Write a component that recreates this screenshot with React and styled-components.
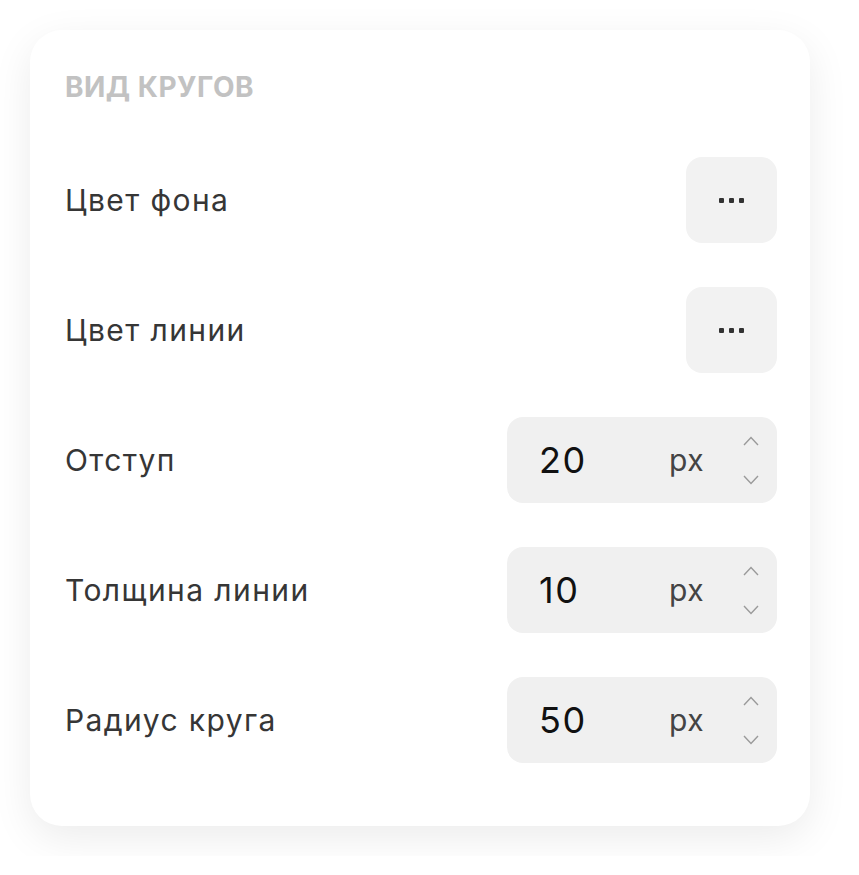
import React from "react"
import styled, { createGlobalStyle } from "styled-components"

const GlobalStyle = createGlobalStyle`
  body {
    margin: 0;
    background: #fff;
    font-family: Inter, "Noto Sans", sans-serif;
  }
`

const Page = styled.div`
  padding: 30px;
`

const Card = styled.section`
  width: 780px;
  box-sizing: border-box;
  background: #fff;
  border-radius: 32px;
  box-shadow: 0 12px 40px rgba(0, 0, 0, 0.08);
  padding: 40px 33px 63px 35px;
`

const Heading = styled.h3`
  margin: 0 0 53px;
  font-size: 28px;
  line-height: 34px;
  font-weight: 700;
  letter-spacing: 0.5px;
  color: #c2c2c2;
  text-transform: uppercase;
`

const List = styled.div`
  display: flex;
  flex-direction: column;
  gap: 44px;
`

const Row = styled.div`
  display: flex;
  align-items: center;
  justify-content: space-between;
  height: 86px;
`

const Label = styled.span`
  font-size: 30px;
  letter-spacing: 1.4px;
  color: #363636;
`

const MoreButton = styled.button`
  width: 91px;
  height: 86px;
  border: 0;
  border-radius: 16px;
  background: #f2f2f2;
  display: flex;
  align-items: center;
  justify-content: center;
  gap: 5px;
  cursor: pointer;
`

const Dot = styled.i`
  width: 5px;
  height: 5px;
  border-radius: 1px;
  background: #333;
`

const NumberBox = styled.div`
  width: 270px;
  height: 86px;
  box-sizing: border-box;
  border-radius: 16px;
  background: #f0f0f0;
  display: grid;
  grid-template-columns: 130px 1fr 53px;
  align-items: center;
  padding-left: 32px;
`

const Value = styled.span`
  font-size: 36px;
  letter-spacing: 1.5px;
  color: #111;
`

const Unit = styled.span`
  font-size: 30px;
  letter-spacing: 0.5px;
  color: #444;
`

const Steppers = styled.div`
  display: flex;
  flex-direction: column;
  align-items: center;
  gap: 29px;
`

const Chevron = ({ up }) => (
  <svg width="16" height="10" viewBox="0 0 16 10" fill="none">
    <path
      d={up ? "M1 9L8 1.5L15 9" : "M1 1L8 8.5L15 1"}
      stroke="#9a9a9a"
      strokeWidth="1.4"
    />
  </svg>
)

const colorRows = ["Цвет фона", "Цвет линии"]
const numberRows = [
  { label: "Отступ", value: 20 },
  { label: "Толщина линии", value: 10 },
  { label: "Радиус круга", value: 50 },
]

export default function App() {
  return (
    <>
      <GlobalStyle />
      <Page>
        <Card>
          <Heading>Вид кругов</Heading>
          <List>
            {colorRows.map(label => (
              <Row key={label}>
                <Label>{label}</Label>
                <MoreButton>
                  <Dot />
                  <Dot />
                  <Dot />
                </MoreButton>
              </Row>
            ))}
            {numberRows.map(r => (
              <Row key={r.label}>
                <Label>{r.label}</Label>
                <NumberBox>
                  <Value>{r.value}</Value>
                  <Unit>px</Unit>
                  <Steppers>
                    <Chevron up />
                    <Chevron />
                  </Steppers>
                </NumberBox>
              </Row>
            ))}
          </List>
        </Card>
      </Page>
    </>
  )
}
